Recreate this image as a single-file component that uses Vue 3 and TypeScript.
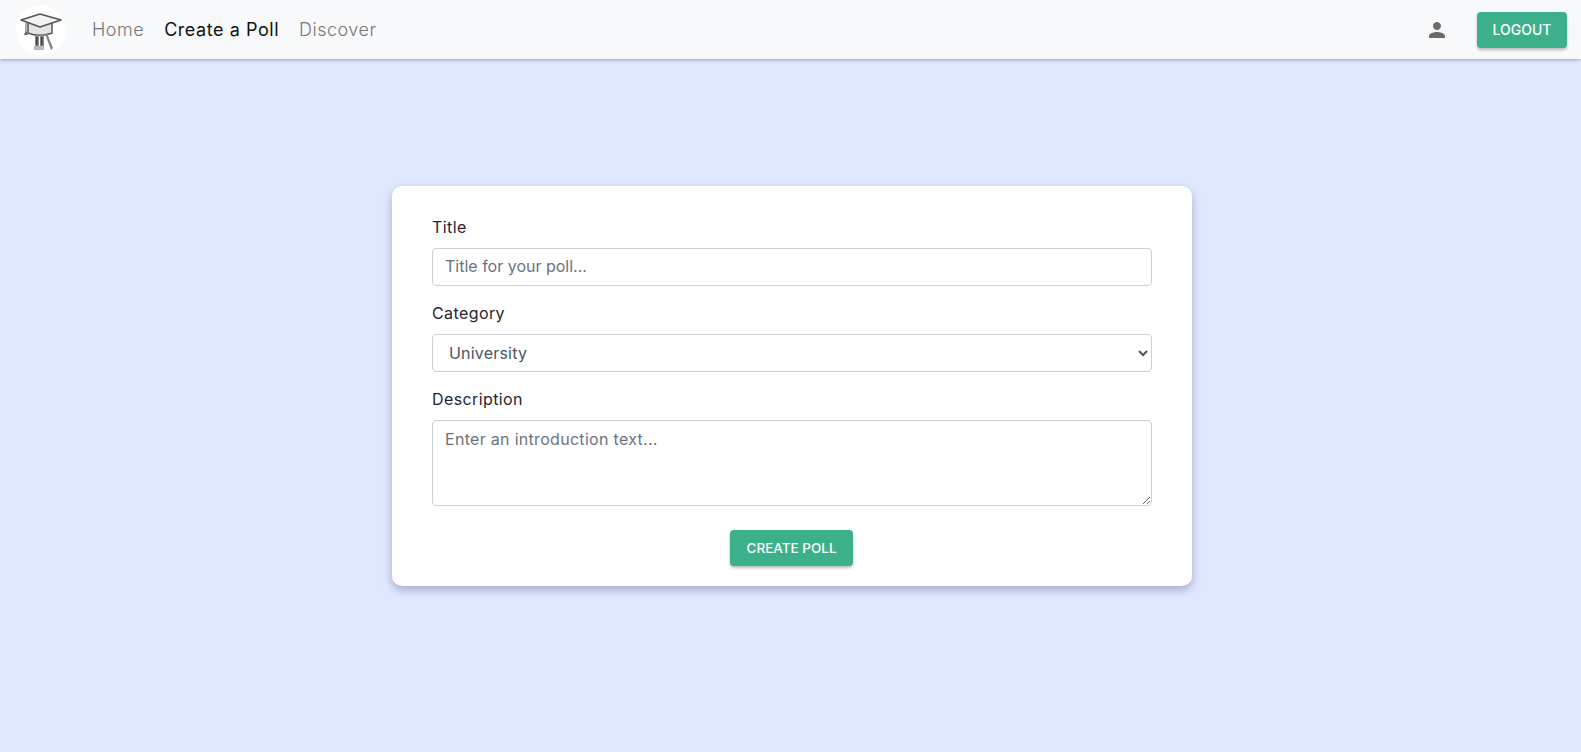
<script setup lang="ts">
import { ref } from 'vue'

const navLinks = [
  { label: 'Home', active: false },
  { label: 'Create a Poll', active: true },
  { label: 'Discover', active: false },
]

const title = ref('')
const category = ref('University')
const description = ref('')
const categories = ['University', 'School', 'Work', 'Other']
</script>

<template>
  <div class="page">
    <nav class="navbar">
      <div class="logo">
        <svg viewBox="0 0 50 50" width="50" height="50" aria-hidden="true">
          <path d="M12 18v10c7 3 17 3 24 0V18" fill="#e4e4e4" stroke="#555" stroke-width="1.500" />
          <path d="M5 15 24 9l21 6-21 7z" fill="#f2f2f2" stroke="#555" stroke-width="1.500" stroke-linejoin="round" />
          <path d="M10 17v9" stroke="#666" stroke-width="1" />
          <path d="M10 25l2 5h-4z" fill="#666" />
          <path d="M19 30h4v15h-4zM24 29h4v16h-4z" fill="#888" />
          <path d="M20 32h1.500v8H20zM25 32h1.500v8H25z" fill="#3f3f3f" />
          <path d="M29 29l2-1 6 15-2 2z" fill="#888" />
          <path d="M18 41h10v4H18z" fill="#b8b8b8" />
        </svg>
      </div>
      <ul class="nav-links">
        <li v-for="link in navLinks" :key="link.label" :class="{ active: link.active }">{{ link.label }}</li>
      </ul>
      <svg class="user-icon" viewBox="0 0 24 24" width="24" height="24" aria-hidden="true">
        <path d="M12 12c2.210 0 4-1.790 4-4s-1.790-4-4-4-4 1.790-4 4 1.790 4 4 4zm0 2c-2.670 0-8 1.340-8 4v2h16v-2c0-2.660-5.330-4-8-4z" fill="currentColor" />
      </svg>
      <button type="button" class="btn logout">LOGOUT</button>
    </nav>

    <main class="content">
      <form class="card" @submit.prevent>
        <label class="field">
          <span class="field-label">Title</span>
          <input v-model="title" class="control" type="text" placeholder="Title for your poll..." />
        </label>
        <label class="field">
          <span class="field-label">Category</span>
          <select v-model="category" class="control select">
            <option v-for="item in categories" :key="item">{{ item }}</option>
          </select>
        </label>
        <label class="field">
          <span class="field-label">Description</span>
          <textarea v-model="description" class="control area" placeholder="Enter an introduction text..."></textarea>
        </label>
        <button type="submit" class="btn create">CREATE POLL</button>
      </form>
    </main>
  </div>
</template>

<style>
body {
  background: #e0e7ff;
}
</style>

<style scoped>
.page {
  display: flex;
  flex-direction: column;
  height: 752px;
  overflow: hidden;
  background: #e0e7ff;
  font-family: "Inter", "Liberation Sans", sans-serif;
  color: #1f2937;
}

.navbar {
  display: flex;
  align-items: center;
  height: 59px;
  flex-shrink: 0;
  padding: 0 14px 0 16px;
  background: #f8f9fa;
  box-shadow: 0 2px 4px -1px rgba(0, 0, 0, 0.2), 0 1px 3px rgba(0, 0, 0, 0.12);
}

.logo {
  width: 50px;
  height: 50px;
  border-radius: 50%;
  background: #fff;
  margin-right: 26px;
}

.logo svg {
  filter: blur(0.4px);
}

.nav-links {
  display: flex;
  gap: 20px;
  flex: 1;
  list-style: none;
  margin: 0;
  padding: 0;
  font-size: 18px;
  font-weight: 300;
  letter-spacing: 0.5px;
  color: #777;
}

.nav-links .active {
  color: #111;
  font-weight: 400;
  letter-spacing: 0.55px;
}

.user-icon {
  color: #6b6b6b;
  margin-right: 28px;
}

.btn {
  border: none;
  border-radius: 4px;
  background: #3bb08a;
  color: #fff;
  font-family: inherit;
  font-size: 14px;
  font-weight: 500;
  box-shadow: 0 2px 3px rgba(0, 0, 0, 0.25);
}

.logout {
  width: 90px;
  height: 36px;
}

.content {
  flex: 1;
  display: flex;
  justify-content: center;
  padding: 127px 0 0 3px;
}

.card {
  display: flex;
  flex-direction: column;
  width: 800px;
  height: 400px;
  box-sizing: border-box;
  padding: 31px 40px 0;
  border-radius: 10px;
  background: #fff;
  box-shadow: 0 4px 8px rgba(55, 65, 110, 0.35);
}

.field {
  display: flex;
  flex-direction: column;
  margin-bottom: 17px;
}

.field-label {
  height: 20px;
  line-height: 20px;
  margin-bottom: 11px;
  font-size: 16px;
  letter-spacing: 0.4px;
  color: #1f2430;
}

.control {
  box-sizing: border-box;
  width: 720px;
  height: 38px;
  padding: 0 12px 2px;
  border: 1px solid #ccd0d8;
  border-radius: 4px;
  background: #fff;
  font-family: inherit;
  font-size: 16px;
  color: #4b5563;
  outline: none;
}

.control::placeholder {
  color: #6b7280;
  opacity: 1;
}

.select {
  padding-bottom: 0;
  letter-spacing: 0.2px;
}

.area {
  height: 86px;
  padding-top: 8px;
  resize: vertical;
  letter-spacing: 0.3px;
}

.create {
  align-self: center;
  width: 123px;
  height: 36px;
  margin: 7px 1px 0 0;
  font-size: 13.5px;
}
</style>
